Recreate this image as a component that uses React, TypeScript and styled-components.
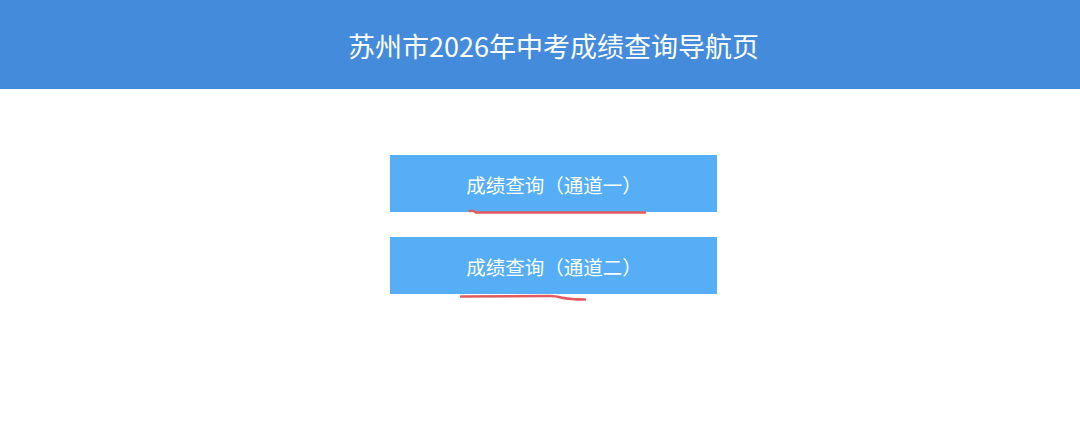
import React from "react";
import styled, { createGlobalStyle } from "styled-components";

const Global = createGlobalStyle`
  html, body { margin: 0; padding: 0; background: #ffffff; }
  body { font-family: "Microsoft YaHei", "Noto Sans CJK SC", "Noto Sans", sans-serif; }
`;

const Page = styled.div`
  width: 1080px;
  height: 443px;
  background: #ffffff;
  display: flex;
  flex-direction: column;
  overflow: hidden;
`;

const Header = styled.header`
  height: 89px;
  background: #448bdb;
  display: flex;
  align-items: center;
  justify-content: center;
  color: #ffffff;
  font-size: 27px;
  font-family: "Noto Sans CJK SC", sans-serif;
  padding: 2px 0 0 27px;
  box-sizing: border-box;
`;

const Links = styled.nav`
  display: flex;
  flex-direction: column;
  align-items: center;
  gap: 25px;
  padding: 66px 0 0 27px;
`;

const LinkWrap = styled.div`
  position: relative;
  width: 327px;
`;

const LinkButton = styled.a`
  display: flex;
  align-items: center;
  justify-content: center;
  height: 57px;
  background: #55aef6;
  color: #ffffff;
  font-size: 19.5px;
  font-family: "Noto Sans CJK SC", sans-serif;
  text-decoration: none;
  padding: 1px 0 0 1px;
  box-sizing: border-box;
  cursor: pointer;
`;

const Mark = styled.svg`
  position: absolute;
  left: 0;
  top: 50px;
  width: 327px;
  height: 20px;
  pointer-events: none;
  overflow: visible;
`;

export default function App() {
  return (
    <>
      <Global />
      <Page>
        <Header>苏州市2026年中考成绩查询导航页</Header>
        <Links>
          <LinkWrap>
            <LinkButton>成绩查询（通道一）</LinkButton>
            <Mark viewBox="0 0 327 20">
              <path
                d="M80 6 Q83 5 86 7.5 L220 7.5 Q240 7.5 255 7.5"
                fill="none"
                stroke="#e25a5d"
                strokeWidth="2.6"
                strokeLinecap="round"
              />
            </Mark>
          </LinkWrap>
          <LinkWrap>
            <LinkButton>成绩查询（通道二）</LinkButton>
            <Mark viewBox="0 0 327 20">
              <path
                d="M71 9.5 L160 9 Q166 9 171 10.5 Q180 12.5 195 12.5"
                fill="none"
                stroke="#e25a5d"
                strokeWidth="2.6"
                strokeLinecap="round"
              />
            </Mark>
          </LinkWrap>
        </Links>
      </Page>
    </>
  );
}
